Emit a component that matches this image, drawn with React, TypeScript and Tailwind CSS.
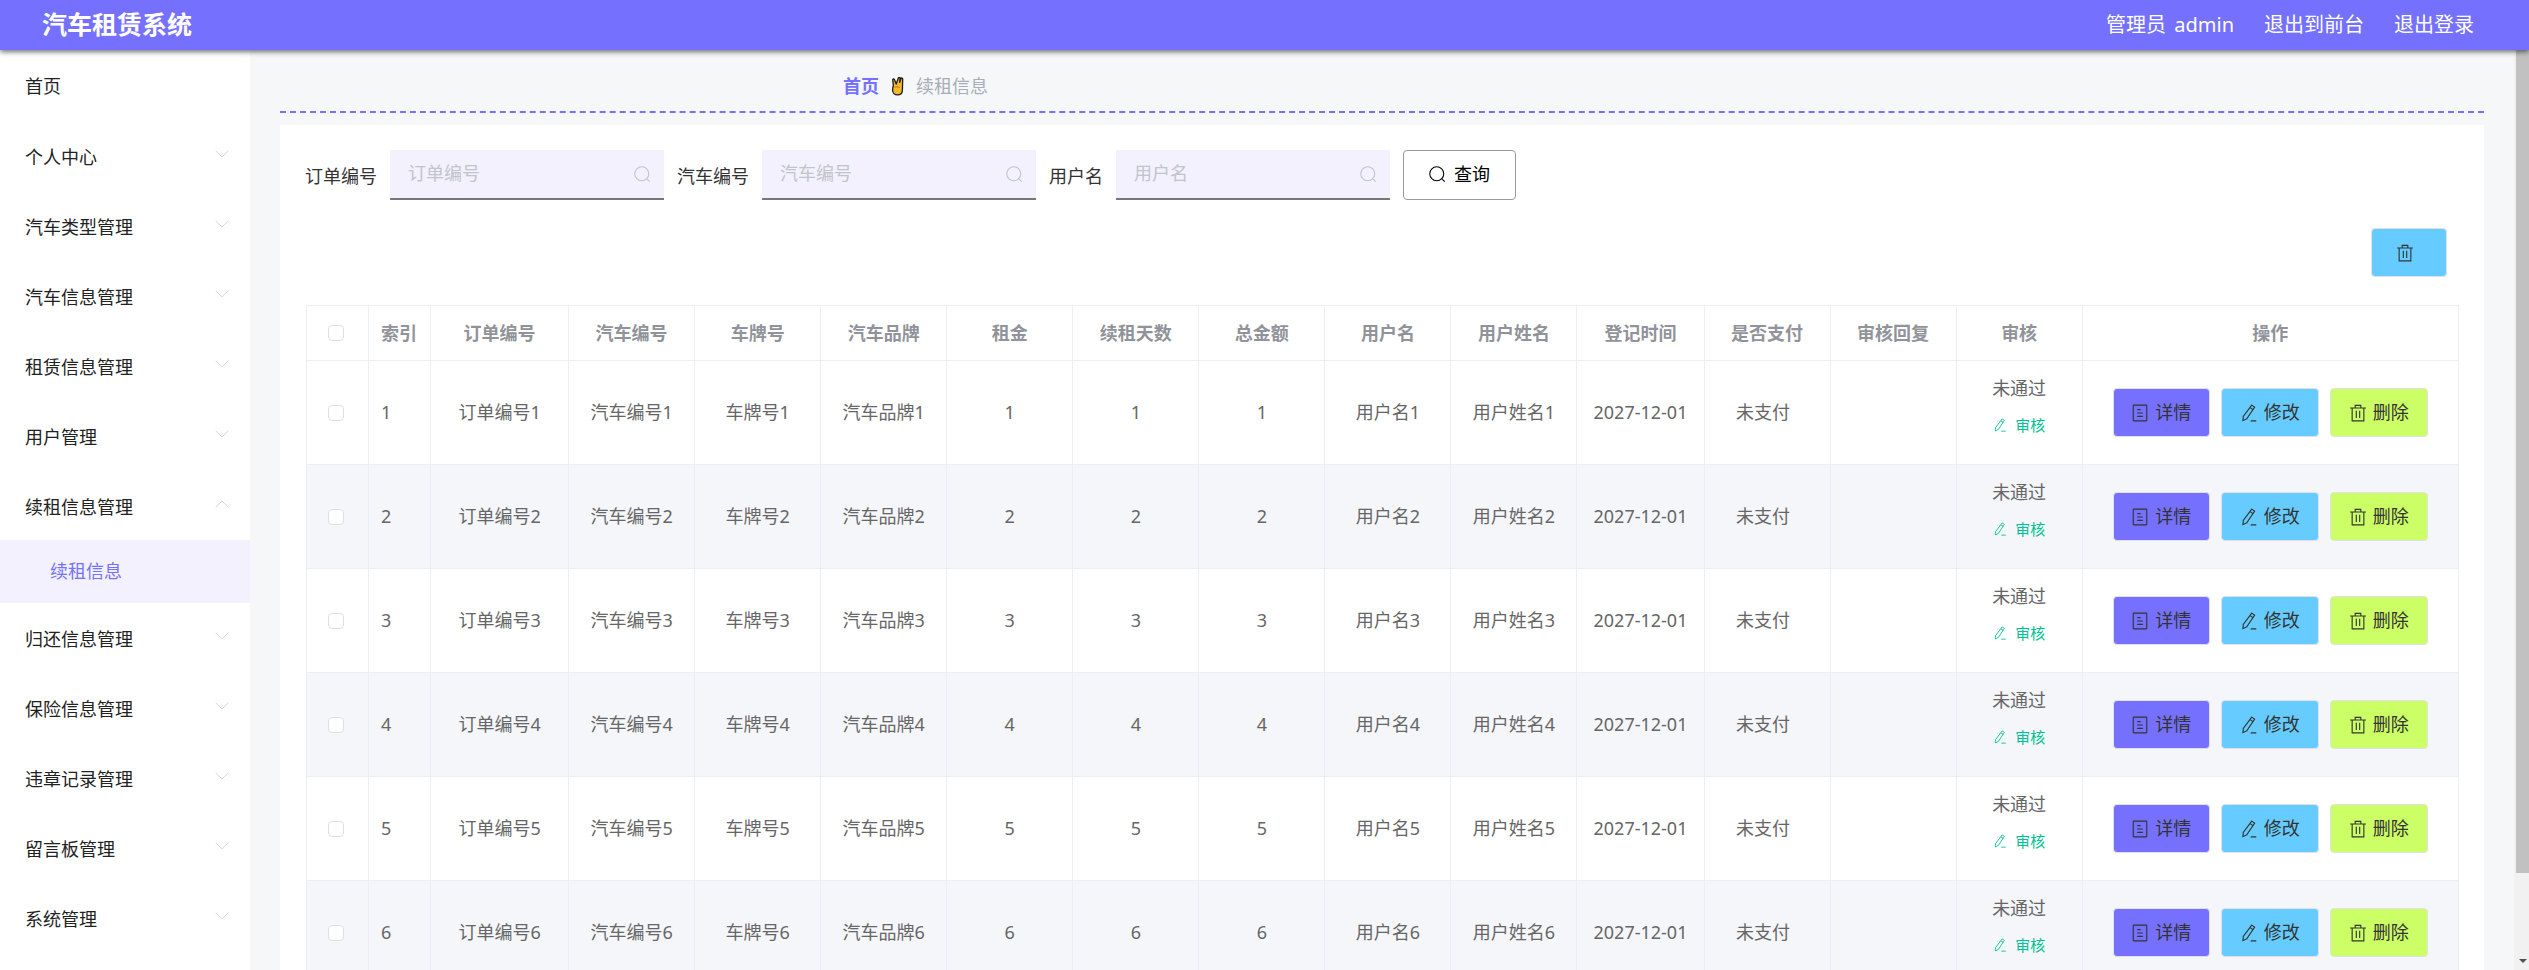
import { ChevronDown, ChevronUp } from "lucide-react";

const menu = [
  { label: "首页" },
  { label: "个人中心", arrow: "down" },
  { label: "汽车类型管理", arrow: "down" },
  { label: "汽车信息管理", arrow: "down" },
  { label: "租赁信息管理", arrow: "down" },
  { label: "用户管理", arrow: "down" },
  { label: "续租信息管理", arrow: "up", child: "续租信息" },
  { label: "归还信息管理", arrow: "down" },
  { label: "保险信息管理", arrow: "down" },
  { label: "违章记录管理", arrow: "down" },
  { label: "留言板管理", arrow: "down" },
  { label: "系统管理", arrow: "down" },
];

const heads = ["订单编号", "汽车编号", "车牌号", "汽车品牌", "租金", "续租天数", "总金额", "用户名", "用户姓名", "登记时间", "是否支付", "审核回复", "审核", "操作"];
const rows = [1, 2, 3, 4, 5, 6];
const filters = [
  { label: "订单编号", width: "w-[71px]" },
  { label: "汽车编号", width: "w-[71px]" },
  { label: "用户名", width: "w-[53px]" },
];

const SearchIcon = ({ className }: { className: string }) => (
  <svg viewBox="0 0 16 16" fill="none" stroke="currentColor" strokeWidth="1" className={className}>
    <circle cx="7.3" cy="7.3" r="6.6" />
    <path d="M12.2 12.2 14.8 14.800" />
  </svg>
);

const DocIcon = () => (
  <svg viewBox="0 0 16 16" fill="none" stroke="currentColor" strokeWidth="1" className="h-[18px] w-[18px]">
    <rect x="2" y="1" width="12" height="14" rx="0.5" />
    <path d="M5.500 5h3M5.500 8h5M5.500 11h5" />
  </svg>
);

const EditIcon = ({ className }: { className: string }) => (
  <svg viewBox="0 0 16 16" fill="none" stroke="currentColor" strokeWidth="1" className={className}>
    <path d="M10.500 1 13 2.800 6 13.200l-3.400 1.600.3-3.700z" />
    <path d="M9 3.200 11.600 5M9.500 15h5" />
  </svg>
);

const TrashIcon = () => (
  <svg viewBox="0 0 16 16" fill="none" stroke="currentColor" strokeWidth="1" className="h-[18px] w-[18px]">
    <path d="M1 3.500h14M2.800 3.500V15h10.400V3.500M5.500 3.500V1.200h5v2.300M6.500 6v6.500M9.500 6v6.500" />
  </svg>
);

const HandIcon = () => (
  <svg viewBox="1.500 0.500 11 17.500" className="h-[19px] w-[13px]">
    <path
      d="M3.200 8.500 2.600 3.200c-.1-1 1.200-1.200 1.500-.3L5.800 7l2-5.600c.4-1 1.800-.6 1.600.4L9 5.500l1.200-3.600c.4-.9 1.700-.5 1.600.5l-.3 10.600c-.1 2.500-2 4-4.400 4-2.600 0-4.600-1.700-4.600-4.200 0-1.800.2-3.400.7-4.300z"
      fill="#f6b62d"
      stroke="#1c1c1c"
      strokeWidth="1.200"
      strokeLinejoin="round"
    />
    <path d="M4 10c1.500-.6 3.500-.6 5 .2" fill="none" stroke="#a8741a" strokeWidth="0.800" />
  </svg>
);

const Sidebar = () => (
  <aside className="w-[250px] shrink-0 bg-white text-[18px] text-[#222]">
    {menu.map((item) => (
      <div key={item.label} className="first:mb-px">
        <div className="relative flex h-[70px] items-center pl-[25px] pt-[3px]">
          <span>{item.label}</span>
          {item.arrow === "down" && (
            <ChevronDown strokeWidth={1} className="absolute left-[210px] top-[21px] h-6 w-6 text-[#d6d4f2]" />
          )}
          {item.arrow === "up" && (
            <ChevronUp strokeWidth={1} className="absolute left-[210px] top-[21px] h-6 w-6 text-[#d6d4f2]" />
          )}
        </div>
        {item.child && (
          <div className="-mt-px flex h-[63px] items-center bg-[#f3f1fe] pl-[50px] text-[#7571fe]">{item.child}</div>
        )}
      </div>
    ))}
  </aside>
);

const Filters = () => (
  <div className="-ml-px flex items-center whitespace-nowrap text-[18px] text-[#333]">
    {filters.map((f, i) => (
      <div key={f.label} className={i === 0 ? "flex items-center" : "ml-[13px] flex items-center"}>
        <span className={`${f.width} mr-[14px] pt-[2px]`}>{f.label}</span>
        <div className="flex h-[50px] w-[274px] items-center justify-between border-b-2 border-[#777] bg-[#f3f1fe] pl-[18px] pr-[13px] text-[#c0c4cc]">
          <span className="pb-[2px]">{f.label}</span>
          <SearchIcon className="h-[17px] w-[17px]" />
        </div>
      </div>
    ))}
    <button className="ml-[13px] flex h-[50px] w-[113px] items-center justify-center gap-[8px] rounded border border-[#999] bg-white pb-[2px] text-black">
      <SearchIcon className="h-[17px] w-[17px]" />
      <span>查询</span>
    </button>
  </div>
);

const ActionButton = ({ bg, width, icon, label }: { bg: string; width: string; icon: React.ReactNode; label: string }) => (
  <button className={`${bg} ${width} flex h-[49px] items-center justify-center gap-[6px] rounded border border-[#dfe1ea] text-[18px] text-[#333]`}>
    {icon}
    <span>{label}</span>
  </button>
);

const DataTable = () => (
  <table className="w-[2153px] table-fixed border-collapse text-center text-[18px] text-[#666]">
    <colgroup>
      <col className="w-[62px]" />
      <col className="w-[62px]" />
      <col className="w-[138px]" />
      <col className="w-[126px]" span={8} />
      <col className="w-[127px]" />
      <col className="w-[126px]" span={3} />
      <col className="w-[376px]" />
    </colgroup>
    <thead>
      <tr className="h-[55px] font-bold text-[#909399]">
        <th className="border border-[#ebeef5] pl-[21px] text-left">
          <div className="h-4 w-4 rounded-sm border border-[#dcdfe6] bg-white" />
        </th>
        <th className="border border-[#ebeef5] pl-[12px] text-left">索引</th>
        {heads.map((h) => (
          <th key={h} className="border border-[#ebeef5]">{h}</th>
        ))}
      </tr>
    </thead>
    <tbody>
      {rows.map((n) => (
        <tr key={n} className={n % 2 === 0 ? "h-[104px] bg-[#f5f6fa]" : "h-[104px] bg-white"}>
          <td className="border border-[#ebeef5] pl-[21px]">
            <div className="h-4 w-4 rounded-sm border border-[#dcdfe6] bg-white" />
          </td>
          <td className="border border-[#ebeef5] pl-[12px] text-left">{n}</td>
          <td className="border border-[#ebeef5]">订单编号{n}</td>
          <td className="border border-[#ebeef5]">汽车编号{n}</td>
          <td className="border border-[#ebeef5]">车牌号{n}</td>
          <td className="border border-[#ebeef5]">汽车品牌{n}</td>
          <td className="border border-[#ebeef5]">{n}</td>
          <td className="border border-[#ebeef5]">{n}</td>
          <td className="border border-[#ebeef5]">{n}</td>
          <td className="border border-[#ebeef5]">用户名{n}</td>
          <td className="border border-[#ebeef5]">用户姓名{n}</td>
          <td className="border border-[#ebeef5]">2027-12-01</td>
          <td className="border border-[#ebeef5] pr-[8px]">未支付</td>
          <td className="border border-[#ebeef5]"></td>
          <td className="border border-[#ebeef5] pb-[15px]">
            <div>未通过</div>
            <div className="mt-[13px] flex items-center justify-center gap-[8px] text-[15px] leading-5 text-[#00c292]">
              <EditIcon className="h-[14px] w-[14px]" />
              <span>审核</span>
            </div>
          </td>
          <td className="border border-[#ebeef5]">
            <div className="flex justify-center gap-[11px]">
              <ActionButton bg="bg-[#7571fe]" width="w-[97px]" icon={<DocIcon />} label="详情" />
              <ActionButton bg="bg-[#66ccff]" width="w-[98px]" icon={<EditIcon className="h-[18px] w-[18px]" />} label="修改" />
              <ActionButton bg="bg-[#ccff66]" width="w-[98px]" icon={<TrashIcon />} label="删除" />
            </div>
          </td>
        </tr>
      ))}
    </tbody>
  </table>
);

export default function App() {
  return (
    <div className="flex h-screen flex-col overflow-hidden bg-[#f6f7f9] font-['Noto_Sans','Noto_Sans_CJK_SC',sans-serif]">
      <header className="relative z-10 flex h-[50px] shrink-0 items-center justify-between bg-[#7571fe] pl-[42px] pr-[55px] text-white shadow-[0_2px_5px_rgba(0,0,0,0.55)]">
        <h1 className="text-[25px] font-bold">汽车租赁系统</h1>
        <div className="flex gap-[30px] text-[20px]">
          <span>
            <span className="mr-[3px]">管理员</span> admin
          </span>
          <span>退出到前台</span>
          <span>退出登录</span>
        </div>
      </header>
      <div className="flex min-h-0 flex-1">
        <Sidebar />
        <main className="min-w-0 flex-1 px-[30px]">
          <div className="flex h-[63px] items-center gap-[12px] border-b-2 border-dashed border-[#7571fe] pl-[563px] pt-3 text-[18px]">
            <span className="font-bold text-[#7571fe]">首页</span>
            <HandIcon />
            <span className="text-[#a8adb8]">续租信息</span>
          </div>
          <section className="mt-[12px] bg-white pl-[26px] pr-[25px] pt-[25px]">
            <Filters />
            <div className="mb-[28px] mr-[12px] mt-[28px] flex justify-end">
              <button className="flex h-[49px] w-[76px] items-center justify-center rounded border border-[#dfe1ea] bg-[#66ccff] pr-[8px] text-[#333]">
                <TrashIcon />
              </button>
            </div>
            <DataTable />
          </section>
        </main>
        <div className="flex w-[15px] shrink-0 flex-col bg-[#f1f1f1]">
          <div className="ml-[2px] h-[823px] bg-[#c1c1c1]" />
          <div className="flex flex-1 items-end justify-center pb-[7px] pl-[2px]">
            <div className="h-0 w-0 border-x-[4px] border-t-[4px] border-x-transparent border-t-[#505050]" />
          </div>
        </div>
      </div>
    </div>
  );
}
